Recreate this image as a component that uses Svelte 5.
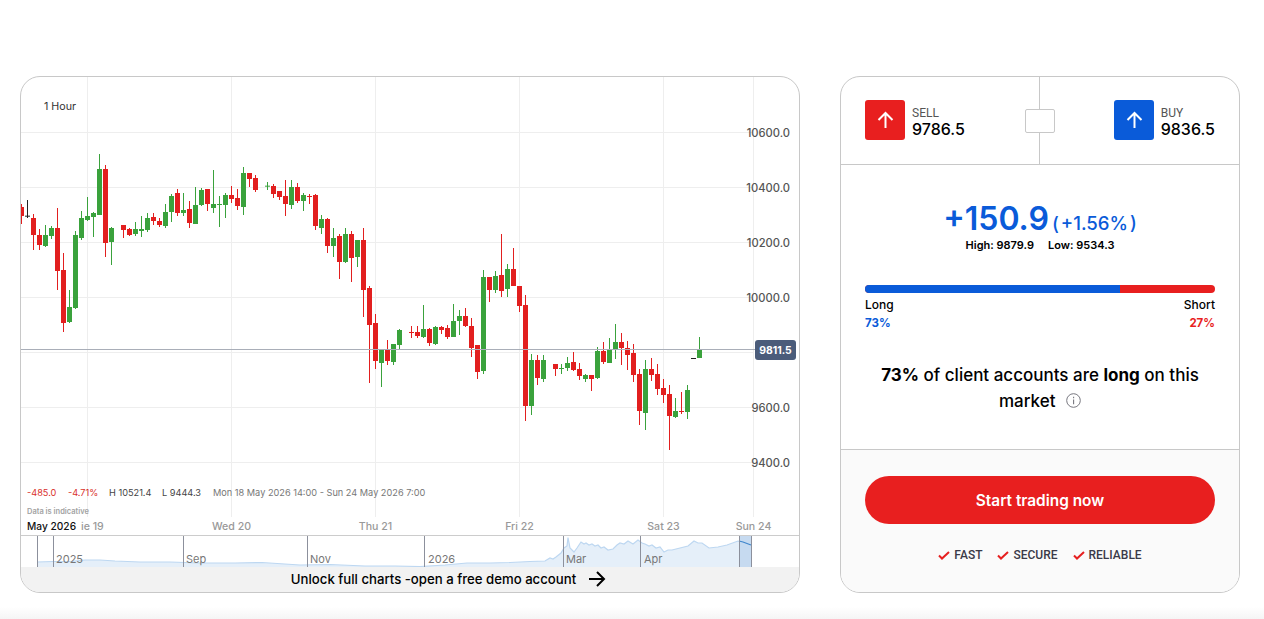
<script lang="ts">
    // candles: colour, wick top, body top, body bottom, wick bottom (in chart units, 3 per px)
    // each block has its own y origin, null means no candle for that hour
    const blocks = [
        { y0 : 76, rows : [
            ['r',384,393,420,444],['k',372,419,422,426],['r',414,426,477,522],['r',459,477,507,522],
            ['g',447,477,510,513],['g',450,456,480,489],['r',396,456,585,642],['r',531,582,741,768],
            ['g',642,693,738,741],['g',465,477,696,699],['g',405,426,486,492],['g',363,420,432,435],
            ['g',408,411,423,483],['g',234,279,417,417],['r',267,279,501,543],['g',453,456,498,567],
            null,['r',447,447,462,486],['r',456,459,477,480],['g',438,459,474,480],['g',420,459,465,483],
            ['g',411,426,462,468],['r',411,423,435,447],['r',426,435,447,453],['g',384,408,450,456],
            ['g',354,360,408,438],['r',339,351,411,420],['g',351,402,411,420],['r',375,399,441,456],
            ['g',333,387,444,444],['g',336,342,387,390],['r',339,339,384,405],['g',282,384,396,411],
            ['g',360,384,387,453],['g',351,357,387,426],['r',330,357,369,381],['r',339,366,390,402],
            ['g',273,291,393,417],['r',291,291,309,333],['r',297,306,342,348],null,['g',318,329,332,342],
            ['r',324,330,354,366],['r',345,345,363,372],
        ]},
        { y0 : 130, rows : [
            ['r',150,198,222,258],['g',150,171,225,237],['r',159,171,213,219],['g',189,195,213,243],
            ['r',192,198,201,222],['r',192,195,288,300],['g',255,267,294,312],['r',264,267,348,369],
            ['g',294,324,348,381],['r',312,318,396,447],['g',294,312,396,399],['r',303,312,384,456],
            ['g',330,330,381,411],['r',294,330,480,561],['r',468,474,585,759],['r',552,579,693,717],
            ['g',660,660,699,771],['r',630,660,693,705],['g',642,642,696,705],['g',597,600,645,660],
            null,['r',588,606,609,624],['r',588,606,618,624],['g',525,597,621,624],['r',594,597,639,648],
            ['g',588,591,642,645],['r',588,591,600,612],['r',585,594,621,627],['g',522,573,621,621],
            ['g',540,558,573,615],['r',534,558,588,591],['r',564,588,654,681],['r',645,645,726,747],
            ['g',420,441,723,732],['r',441,441,480,516],['g',423,438,480,489],['r',312,435,483,501],
            ['g',402,417,477,501],['r',354,417,468,468],['r',468,468,528,546],['r',495,525,828,873],
            ['g',672,690,828,855],['r',675,690,744,765],
        ]},
        { y0 : 300, rows : [
            ['g',165,180,237,246],null,['r',192,192,207,228],['g',192,204,207,222],['g',171,189,204,213],
            ['r',156,186,210,213],['r',189,207,228,240],['g',222,225,237,246],['r',225,225,237,273],
            ['g',141,153,234,237],['r',126,153,186,192],['g',114,150,189,189],['g',72,126,150,177],
            ['r',99,126,144,195],['r',123,144,165,210],['r',132,159,225,246],['r',207,222,333,375],
            ['g',180,207,339,390],['r',174,207,225,243],['r',192,222,267,285],['r',237,264,285,309],
            ['r',255,282,348,450],['g',294,333,351,354],['r',276,333,336,342],['g',255,270,336,357],
            ['k',174,174,177,177],['g',111,147,174,174],
        ]},
    ];

    const fills = { r : '#e21f1f', g : '#3aa23c', k : '#222' };

    let index = 0;
    const candles = [];
    for (const block of blocks)
    {
        for (const row of block.rows)
        {
            if (row)
            {
                const [c, wt, bt, bb, wb] = row;
                candles.push({
                    x : 19 + index * 6,
                    fill : fills[c],
                    wickTop : block.y0 + wt / 3,
                    wickH : (wb - wt) / 3,
                    bodyTop : block.y0 + bt / 3,
                    bodyH : (bb - bt) / 3,
                });
            }
            index++;
        }
    }

    const rows = [132.5, 187.5, 242.5, 297.5, 352.5, 407.5, 462.5];
    const prices = [
        { y : 133, label : '10600.0' },
        { y : 188, label : '10400.0' },
        { y : 243, label : '10200.0' },
        { y : 298, label : '10000.0' },
        { y : 408, label : '9600.0' },
        { y : 463, label : '9400.0' },
    ];
    const days = [
        { x : 231.5, label : 'Wed 20' },
        { x : 375.5, label : 'Thu 21' },
        { x : 519.5, label : 'Fri 22' },
        { x : 663.5, label : 'Sat 23' },
        { x : 753.5, label : 'Sun 24' },
    ];
    const columns = [87.5, 231.5, 375.5, 519.5, 663.5, 753.5];

    const navLines = [37.5, 53.5, 183.5, 307.5, 424.5, 563.5, 640.5, 739.5, 751.5];
    const navLabels = [
        { x : 56, label : '2025' },
        { x : 186, label : 'Sep' },
        { x : 310, label : 'Nov' },
        { x : 428, label : '2026' },
        { x : 566, label : 'Mar' },
        { x : 644, label : 'Apr' },
    ];
    const history = [
        [37,562],[53,561.5],[70,561.5],[85,560],[100,560],[115,561],[140,562],[170,562],[200,563],
        [235,563],[262,562.5],[300,565],[330,564.5],[365,566],[395,566],[420,566.5],[445,565],[467,563],
        [490,563],[510,562.5],[530,561.5],[545,561],[550,558],[553,559],[556,557],[561,553],[564,548],[567,546],
        [568,537.5],[570,548],[574,552],[577,548],[581,542],[584,544],[586,543],[589,545],[592,544],[595,546],[598,545],
        [601,548],[604,547],[608,550],[613,549],[617,545],[620,543],[624,544],[628,541],[633,544],[638,540],[642,543],[645,544],
        [649,546],[652,545],[656,548],[660,547],[664,552],[668,550],[672,550],[680,548],[688,546],[694,541],[698,543],[702,543],
        [709,548],[718,547],[727,545],[738,541],[743,542],[751,545],
    ];
    const line = history.map(([x, y], i) => (i ? 'L' : 'M') + x + ' ' + y).join(' ');
    const area = line + ' L751 567 L37 567 Z';

    const perks = ['FAST', 'SECURE', 'RELIABLE'];
</script>

<main class="page">
    <section class="card chart">
        <svg class="plot" viewBox="21 77 778 458" width="778" height="458">
            {#each rows as y}
                <line x1="21" x2="753" y1={y} y2={y} class="grid" />
            {/each}
            {#each columns as x}
                <line x1={x} x2={x} y1="77" y2="517" class="grid" />
            {/each}

            <text x="44" y="110" class="interval">1 Hour</text>

            {#each candles as c}
                <rect x={c.x + 2} y={c.wickTop} width="1" height={c.wickH} fill={c.fill} />
                <rect x={c.x} y={c.bodyTop} width="5" height={c.bodyH} fill={c.fill} />
            {/each}

            <line x1="21" x2="755" y1="349.5" y2="349.5" class="last" />

            {#each prices as p}
                <text x="790" y={p.y + 4} class="price">{p.label}</text>
            {/each}
            <rect x="755" y="340" width="41" height="20" rx="3" fill="#4b5c7a" />
            <text x="775.5" y="354" class="tag">9811.5</text>

            <text y="496" class="stats">
                <tspan x="27" class="down">-485.0</tspan>
                <tspan x="68" class="down">-4.71%</tspan>
                <tspan x="109">H 10521.4</tspan>
                <tspan x="162">L 9444.3</tspan>
                <tspan x="213" class="range">Mon 18 May 2026 14:00 - Sun 24 May 2026 7:00</tspan>
            </text>
            <text x="27" y="514" class="note">Data is indicative</text>

            <text x="81" y="530" class="day-cut">ie 19</text>
            {#each days as d}
                <text x={d.x} y="530" class="day">{d.label}</text>
            {/each}
            <text x="27" y="530" class="month">May 2026</text>
        </svg>

        <svg class="navigator" viewBox="21 536 778 31" width="778" height="31">
            <path d={area} fill="#e5eff9" />
            <path d={line} fill="none" stroke="#bdd7f1" stroke-width="1.2" />
            <rect x="739.5" y="536" width="12" height="31" fill="#c6daf0" />
            <path d="M739 541 L743 542 L751 545" fill="none" stroke="#3f86cc" stroke-width="1.2" />
            {#each navLines as x}
                <line x1={x} x2={x} y1="536" y2="567" stroke="#8c909c" />
            {/each}
            {#each navLabels as n}
                <text x={n.x} y="563" class="nav-label">{n.label}</text>
            {/each}
        </svg>

        <div class="unlock">
            <span>Unlock full charts -open a free demo account</span>
            <svg width="20" height="18" viewBox="0 0 20 18" aria-hidden="true">
                <path d="M2 9h15M10 2l7 7-7 7" fill="none" stroke="#000" stroke-width="2" />
            </svg>
        </div>
    </section>

    <aside class="card trade">
        <header class="quotes">
            <div class="quote">
                <span class="square sell">
                    <svg width="40" height="40" viewBox="0 0 40 40" aria-hidden="true">
                        <path d="M20.5 28V13M13.5 20l7-7 7 7" fill="none" stroke="#fff" stroke-width="2" />
                    </svg>
                </span>
                <div class="quote-text">
                    <small>SELL</small>
                    <strong>9786.5</strong>
                </div>
            </div>
            <div class="spread"></div>
            <div class="quote">
                <span class="square buy">
                    <svg width="40" height="40" viewBox="0 0 40 40" aria-hidden="true">
                        <path d="M20.5 28V13M13.5 20l7-7 7 7" fill="none" stroke="#fff" stroke-width="2" />
                    </svg>
                </span>
                <div class="quote-text">
                    <small>BUY</small>
                    <strong>9836.5</strong>
                </div>
            </div>
        </header>

        <div class="body">
            <div class="change">
                <span class="big">+150.9</span>
                <span class="pct">( +1.56% )</span>
            </div>
            <div class="range-row">
                <span>High: 9879.9</span>
                <span>Low: 9534.3</span>
            </div>

            <div class="bar"><div class="bar-long" style:width="72.8%"></div></div>
            <div class="split">
                <div>
                    <div>Long</div>
                    <div class="long-pct">73%</div>
                </div>
                <div class="right">
                    <div>Short</div>
                    <div class="short-pct">27%</div>
                </div>
            </div>

            <p class="sentiment">
                <b>73%</b> of client accounts are <b>long</b> on this market
                <svg class="info" width="15" height="15" viewBox="0 0 15 15" aria-hidden="true">
                    <circle cx="7.5" cy="7.5" r="6.8" fill="none" stroke="#77777f" />
                    <path d="M7.6 6.6V11.2M7.6 3.8v1.4" stroke="#77777f" stroke-width="1.1" fill="none" />
                </svg>
            </p>
        </div>

        <footer class="cta">
            <button class="start">Start trading now</button>
            <ul class="perks">
                {#each perks as perk}
                    <li>
                        <svg width="12" height="9" viewBox="0 0 12 9" aria-hidden="true">
                            <path d="M1 4.5l3 3L11 1" fill="none" stroke="#e62020" stroke-width="2" />
                        </svg>
                        {perk}
                    </li>
                {/each}
            </ul>
        </footer>
    </aside>
</main>
<div class="fade"></div>

<style>
    :global(body) {
        margin : 0;
        background : #fff;
        font-family : "Inter", "Liberation Sans", sans-serif;
        color : #000;
    }

    .page {
        display : flex;
        gap : 40px;
        padding : 76px 24px 0 20px;
        height : 517px;
    }

    .card {
        box-sizing : border-box;
        height : 517px;
        border : 1px solid #c8c8c8;
        border-radius : 20px;
        overflow : hidden;
        background : #fff;
    }

    .chart {
        width : 780px;
        display : flex;
        flex-direction : column;
    }
    .plot, .navigator { display : block; flex : none; }
    .navigator { border-top : 1px solid #ccc; }

    .grid { stroke : #eee; }
    .last { stroke : #a9aeb8; }

    .interval { font-size : 10.7px; fill : #333; }
    .price { font-size : 11.2px; font-weight : 500; fill : #555; text-anchor : end; }
    .tag { font-size : 10.4px; font-weight : 700; fill : #fff; text-anchor : middle; }

    .stats { font-size : 9.2px; fill : #444; }
    .down { fill : #d9302c; }
    .range { fill : #777; }
    .note { font-size : 7.5px; font-weight : 600; fill : #a2a2a2; }

    .day { font-size : 10.6px; fill : #999; text-anchor : middle; font-weight : 500; }
    .day-cut { font-size : 10.6px; fill : #999; font-weight : 500; }
    .month { font-size : 10.2px; fill : #111; font-weight : 500; }

    .nav-label { font-size : 11px; fill : #777; }

    .unlock {
        flex : 1;
        display : flex;
        align-items : center;
        justify-content : center;
        gap : 11px;
        padding : 0 0 1px 78px;
        background : #f2f2f2;
        font-size : 13.2px;
        font-weight : 500;
    }

    .trade {
        width : 400px;
        display : flex;
        flex-direction : column;
    }

    .quotes {
        position : relative;
        height : 87px;
        flex : none;
        box-sizing : content-box;
        border-bottom : 1px solid #c8c8c8;
        display : flex;
        justify-content : space-between;
        align-items : flex-start;
        padding : 0 24px;
    }
    .quotes::before {
        content : "";
        position : absolute;
        left : 198px;
        top : 0;
        bottom : 0;
        width : 1px;
        background : #c8c8c8;
    }

    .quote {
        display : flex;
        align-items : center;
        gap : 7px;
        margin-top : 23px;
    }
    .square {
        width : 40px;
        height : 40px;
        border-radius : 3px;
        display : block;
    }
    .square svg { display : block; }
    .sell { background : #e81f1f; }
    .buy { background : #0a5bd9; }

    .quote-text { display : flex; flex-direction : column; padding-top : 5px; }
    .quote-text small {
        font-family : "Roboto", sans-serif;
        font-size : 12px;
        line-height : 13px;
        color : #555;
    }
    .quote-text strong {
        font-size : 16px;
        line-height : 18px;
        margin-top : 0;
        font-weight : 500;
    }

    .spread {
        position : absolute;
        left : 184px;
        top : 32px;
        box-sizing : border-box;
        width : 30px;
        height : 24px;
        background : #fff;
        border : 1px solid #c8c8c8;
        border-radius : 2px;
    }

    .body {
        flex : 1;
        padding : 36px 24px 0;
        text-align : center;
    }

    .change {
        display : flex;
        justify-content : center;
        align-items : baseline;
        gap : 3px;
        color : #0a5bd9;
        line-height : 36px;
    }
    .big { font-size : 32px; font-weight : 600; }
    .pct { font-size : 18.6px; font-weight : 500; word-spacing : -3px; }

    .range-row {
        display : flex;
        justify-content : center;
        gap : 14px;
        font-size : 11px;
        line-height : 14px;
        font-weight : 600;
        margin-top : -3px;
    }

    .bar {
        height : 8px;
        margin-top : 33px;
        background : #e81f1f;
        border-radius : 4px;
        overflow : hidden;
    }
    .bar-long { height : 100%; background : #0a5bd9; }

    .split {
        display : flex;
        justify-content : space-between;
        text-align : left;
        font-size : 12px;
        line-height : 18px;
        font-weight : 500;
        margin-top : 3px;
    }
    .right { text-align : right; }
    .long-pct { color : #0a5bd9; font-weight : 700; font-size : 11.5px; }
    .short-pct { color : #e81f1f; font-weight : 700; font-size : 11.5px; }

    .sentiment {
        margin : 30px 0 0;
        font-size : 17px;
        line-height : 26px;
        font-weight : 500;
    }
    .sentiment b { font-weight : 700; }
    .info { vertical-align : -1px; margin-left : 6px; }

    .cta {
        flex : none;
        box-sizing : border-box;
        height : 143px;
        border-top : 1px solid #c8c8c8;
        background : #fafafa;
        padding : 26px 24px 0;
    }
    .start {
        display : block;
        width : 100%;
        height : 48px;
        border : none;
        border-radius : 24px;
        background : #e81f1f;
        color : #fff;
        font : 600 15.4px "Inter", sans-serif;
    }
    .perks {
        list-style : none;
        margin : 23px 0 0;
        padding : 0;
        display : flex;
        justify-content : center;
        gap : 15px;
        font-family : "Roboto", sans-serif;
        font-size : 12px;
        font-weight : 500;
        line-height : 16px;
        color : #3a3a48;
    }
    .perks li { display : flex; align-items : center; gap : 4px; }

    .fade {
        height : 12px;
        margin-top : 14px;
        background : linear-gradient(#fff, #f5f5f5);
    }
</style>
